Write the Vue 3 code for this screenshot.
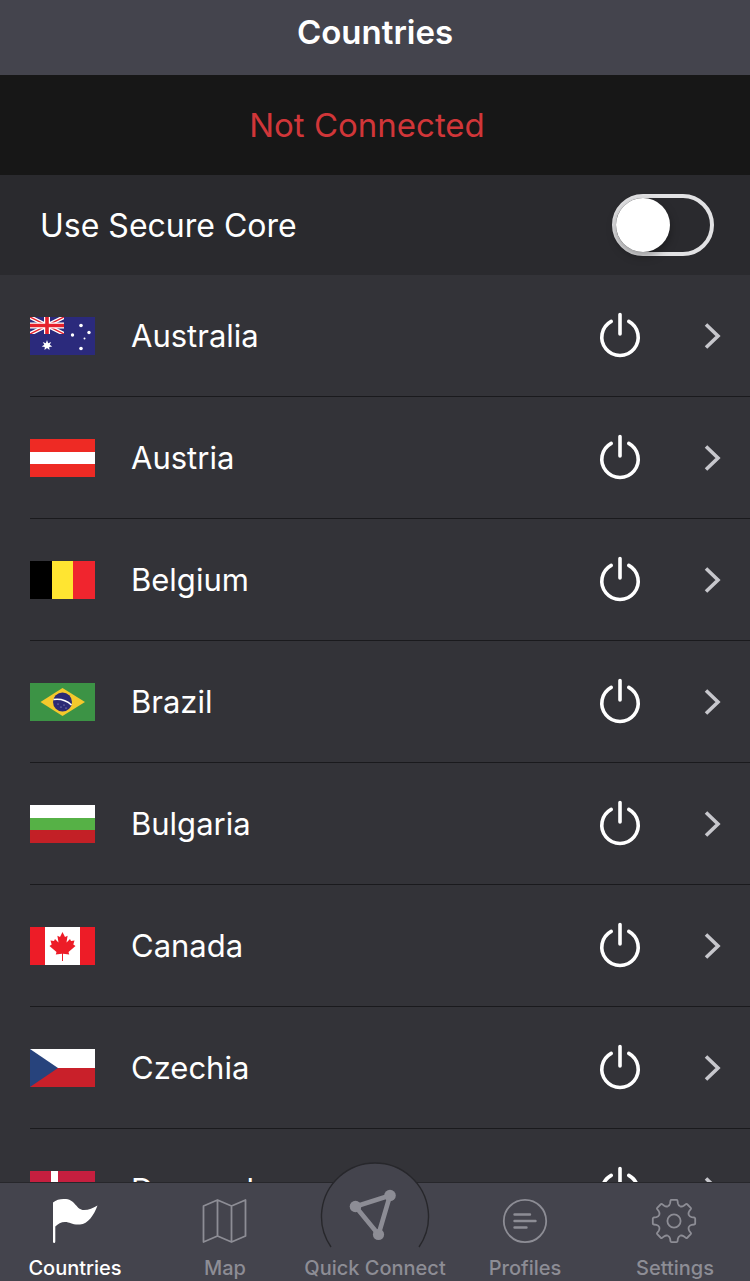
<script setup>
import { ref } from 'vue'

// Whether connections are routed through Secure Core servers
const secureCore = ref(false)

// Currently selected tab in the bottom bar
const activeTab = ref('Countries')

const countries = [
  { code: 'au', name: 'Australia' },
  { code: 'at', name: 'Austria' },
  { code: 'be', name: 'Belgium' },
  { code: 'br', name: 'Brazil' },
  { code: 'bg', name: 'Bulgaria' },
  { code: 'ca', name: 'Canada' },
  { code: 'cz', name: 'Czechia' },
  { code: 'dk', name: 'Denmark' },
]

const tabs = ['Countries', 'Map', 'Quick Connect', 'Profiles', 'Settings']

// The gear is one tooth repeated every 45 degrees
const gearAngles = [0, 45, 90, 135, 180, 225, 270, 315]
</script>

<template>
  <div class="app">
    <header class="title-bar">
      <h1>Countries</h1>
    </header>

    <p class="status">Not Connected</p>

    <div class="secure-core">
      <label for="secure-core">Use Secure Core</label>
      <input id="secure-core" v-model="secureCore" type="checkbox" role="switch" class="switch" />
    </div>

    <main class="list">
      <ul>
        <li v-for="country in countries" :key="country.code" class="row">
          <svg class="flag" viewBox="0 0 65 38" preserveAspectRatio="none" aria-hidden="true">
            <g v-if="country.code === 'au'">
              <rect width="65" height="38" fill="#2b2a7c" />
              <svg width="34" height="17" viewBox="0 0 34 17">
                <path d="M0 0L34 17M34 0L0 17" stroke="#fff" stroke-width="4" />
                <path d="M0 0L34 17M34 0L0 17" stroke="#e5202c" stroke-width="1.4" />
                <path d="M17 0V17M0 8.5H34" stroke="#fff" stroke-width="6" />
                <path d="M17 0V17M0 8.5H34" stroke="#e5202c" stroke-width="3.6" />
              </svg>
              <path
                d="M17 23L18.2 26.2L21.2 25L19.7 27.8L22.3 29.5L19.2 30L19.5 33L17 31L14.5 33L14.8 30L11.7 29.5L14.3 27.8L12.8 25L15.8 26.2Z"
                fill="#fff"
              />
              <g fill="#fff">
                <circle cx="51" cy="8.5" r="1.8" />
                <circle cx="42.5" cy="18" r="1.7" />
                <circle cx="59" cy="15.5" r="1.7" />
                <circle cx="54.5" cy="21.5" r="1" />
                <circle cx="51" cy="31.5" r="1.8" />
              </g>
            </g>
            <g v-else-if="country.code === 'at'">
              <rect width="65" height="38" fill="#ee2a24" />
              <rect y="13" width="65" height="12" fill="#fff" />
            </g>
            <g v-else-if="country.code === 'be'">
              <rect width="22" height="38" fill="#000" />
              <rect x="22" width="21" height="38" fill="#ffe531" />
              <rect x="43" width="22" height="38" fill="#f0252e" />
            </g>
            <g v-else-if="country.code === 'br'">
              <rect width="65" height="38" fill="#3c9345" />
              <path d="M32.5 5L55 19L32.5 33L10.5 19Z" fill="#f4c92c" />
              <circle cx="32.5" cy="19" r="9.5" fill="#2c2a75" />
              <path d="M23.5 16.5Q34 15 41.5 22" fill="none" stroke="#fff" stroke-width="1.6" />
              <g fill="#b9b8dc">
                <circle cx="28" cy="21" r="0.6" />
                <circle cx="31" cy="24" r="0.6" />
                <circle cx="34" cy="22" r="0.6" />
                <circle cx="36" cy="25" r="0.6" />
              </g>
            </g>
            <g v-else-if="country.code === 'bg'">
              <rect width="65" height="13" fill="#fff" />
              <rect y="13" width="65" height="12" fill="#56b146" />
              <rect y="25" width="65" height="13" fill="#c32026" />
            </g>
            <g v-else-if="country.code === 'ca'">
              <rect width="65" height="38" fill="#ed1c27" />
              <rect x="15" width="35" height="38" fill="#fff" />
              <path
                d="M32.5 5L35 10L37.6 8.7L36.5 15.5L40 12L41 14L44.5 13.5L43.3 17.5L45.5 19L38.5 25L39.2 27.5L33 26.7V34H32V26.7L25.8 27.5L26.5 25L19.5 19L21.7 17.5L20.5 13.5L24 14L25 12L28.5 15.5L27.4 8.7L30 10Z"
                fill="#ed1c27"
              />
            </g>
            <g v-else-if="country.code === 'cz'">
              <rect width="65" height="19" fill="#fff" />
              <rect y="19" width="65" height="19" fill="#c9202a" />
              <path d="M0 0L28 19L0 38Z" fill="#27437c" />
            </g>
            <g v-else>
              <rect width="65" height="38" fill="#c51f3f" />
              <path d="M24.5 0V38M0 19H65" stroke="#fff" stroke-width="7" />
            </g>
          </svg>

          <span class="name">{{ country.name }}</span>

          <button type="button" class="power" :aria-label="`Connect to ${country.name}`">
            <svg viewBox="0 0 44 48" aria-hidden="true">
              <path d="M13.2 9.4A18.2 18.2 0 1 0 30.8 9.4M22 2.5V22" />
            </svg>
          </button>

          <a href="#" class="details" :aria-label="`${country.name} servers`">
            <svg viewBox="0 0 20 30" aria-hidden="true">
              <path d="M4 3.5L16 15L4 26.5" />
            </svg>
          </a>
        </li>
      </ul>
    </main>

    <nav class="tab-bar">
      <button
        v-for="tab in tabs"
        :key="tab"
        type="button"
        class="tab"
        :class="{ active: tab === activeTab }"
        @click="activeTab = tab"
      >
        <!-- Raised disc behind the middle tab, open at the bottom -->
        <svg v-if="tab === 'Quick Connect'" class="disc" viewBox="0 0 110 88" aria-hidden="true">
          <path class="disc-fill" d="M11 86A53.5 53.5 0 1 1 99 86Z" />
          <path class="disc-edge" d="M11 86A53.5 53.5 0 1 1 99 86" />
        </svg>

        <svg class="icon" viewBox="0 0 46 46" aria-hidden="true">
          <g v-if="tab === 'Countries'">
            <path
              class="solid"
              d="M1 4.5C4.5 1.5 9 .5 14 1C24 2 24 12 32 12C37 12 41 10 45.5 7.500C42 17 36 26 28 26.500C20 27 18 24 13 24C9 24 6 26 3.300 28.500V43.500Q3.300 45 2.100 45Q1 45 1 43.500Z"
            />
          </g>
          <path
            v-else-if="tab === 'Map'"
            class="thin"
            d="M1.500 8L15.500 2L29.500 8L43.500 2V38L29.500 44L15.500 38L1.500 44ZM15.500 2V38M29.500 8V44"
          />
          <g v-else-if="tab === 'Quick Connect'">
            <path class="thick" d="M3.500 8.500L38 -2.500L26.500 36.500Z" />
            <circle class="solid" cx="3.500" cy="8.500" r="5.800" />
            <circle class="solid" cx="38" cy="-2.500" r="5.800" />
            <circle class="solid" cx="26.500" cy="36.500" r="5.600" />
          </g>
          <g v-else-if="tab === 'Profiles'">
            <circle class="thin" cx="23" cy="23" r="21.200" />
            <path class="bars" d="M12.500 16.500H28M12.500 23H33.500M12.500 29.500H24.500" />
          </g>
          <g v-else transform="translate(22 23)">
            <path
              v-for="angle in gearAngles"
              :key="angle"
              class="thin"
              :transform="`rotate(${angle})`"
              d="M-6.100-14.700C-4.600-15.500-4.200-16.200-3.900-17.600L-3.500-20.400Q-3.300-21.200-2.500-21.200H2.500Q3.300-21.200 3.500-20.400L3.900-17.600C4.200-16.200 4.600-15.500 6.100-14.700"
            />
            <circle class="thin" r="6.600" />
          </g>
        </svg>
        <span class="tab-label">{{ tab }}</span>
      </button>
    </nav>
  </div>
</template>

<style>
body {
  margin: 0;
  background: #333338;
}
</style>

<style scoped>
.app {
  display: flex;
  flex-direction: column;
  height: 100vh;
  overflow: hidden;

  background: #333338;
  color: #fff;
  font-family: Inter, 'Liberation Sans', sans-serif;
}

.title-bar {
  flex-shrink: 0;
  box-sizing: border-box;
  height: 75px;
  padding-top: 12px;

  background: #44444d;
  text-align: center;
}

.title-bar h1 {
  margin: 0;
  font-size: 33px;
  font-weight: 600;
  line-height: 40px;
}

.status {
  flex-shrink: 0;
  margin: 0;
  padding-right: 16px;

  background: #171717;
  color: #d13639;
  font-size: 33px;
  line-height: 100px;
  text-align: center;
}

.secure-core {
  display: flex;
  flex-shrink: 0;
  align-items: center;
  justify-content: space-between;
  height: 100px;
  padding: 0 36px 0 40px;

  background: #2a2a2e;
  font-size: 32px;
}

.switch {
  appearance: none;
  box-sizing: border-box;
  width: 102px;
  height: 62px;
  margin: 0;

  border: 4px solid #e2e2e4;
  border-radius: 31px;
  cursor: pointer;
}

.switch::before {
  content: '';
  display: block;
  width: 54px;
  height: 54px;

  border-radius: 50%;
  background: #fff;
  box-shadow: 0 4px 10px rgba(0, 0, 0, 0.35);
  transition: margin 0.2s ease;
}

.switch:checked {
  background: #4fb84f;
}

.switch:checked::before {
  margin-left: 40px;
}

.list {
  flex: 1;
  min-height: 0;
  overflow: hidden;
}

.list ul {
  margin: 0;
  padding: 0 0 0 30px;
  list-style: none;
}

.row {
  display: flex;
  align-items: center;
  height: 121px;
  padding-right: 28px;

  border-bottom: 1px solid #1a1a1d;
}

.flag {
  flex-shrink: 0;
  width: 65px;
  height: 38px;
}

.name {
  flex: 1;
  padding-left: 36px;
  font-size: 31px;
  line-height: 40px;
}

.power {
  width: 44px;
  height: 48px;
  margin-right: 60px;
  padding: 0;

  border: none;
  background: none;
  cursor: pointer;
}

.details {
  width: 20px;
  height: 30px;
}

.power svg,
.details svg {
  display: block;
  width: 100%;
  height: 100%;

  fill: none;
  stroke: #fff;
  stroke-width: 3.6;
  stroke-linecap: round;
}

.details svg {
  stroke: #c7c7cc;
  stroke-linecap: butt;
}

.tab-bar {
  position: relative;
  display: flex;
  flex-shrink: 0;
  height: 98px;

  border-top: 1px solid #27272b;
  background: #44444d;
}

.tab {
  position: relative;
  display: flex;
  flex: 1 1 0;
  flex-direction: column;
  align-items: center;
  gap: 12px;
  min-width: 0;
  padding: 15px 0 0;

  border: none;
  background: none;
  color: #8d8d95;
  font-family: inherit;
  cursor: pointer;
}

.tab.active {
  color: #fff;
}

.icon {
  position: relative;
  width: 46px;
  height: 46px;
  overflow: visible;
  fill: none;
  stroke: none;
}

.solid {
  fill: currentColor;
}

.thin,
.thick,
.bars {
  stroke: currentColor;
  stroke-width: 1.8;
  stroke-linejoin: round;
}

.thick {
  stroke-width: 4.6;
}

.bars {
  stroke-width: 2.4;
  stroke-linecap: round;
}

.disc {
  position: absolute;
  top: -22px;
  left: 50%;
  width: 110px;
  height: 88px;
  transform: translateX(-50%);
}

.disc-fill {
  fill: #44444d;
}

.disc-edge {
  fill: none;
  stroke: #27272b;
  stroke-width: 1.4;
}

.tab-label {
  position: relative;
  font-size: 20px;
  font-weight: 500;
  line-height: 24px;
  white-space: nowrap;
}
</style>
